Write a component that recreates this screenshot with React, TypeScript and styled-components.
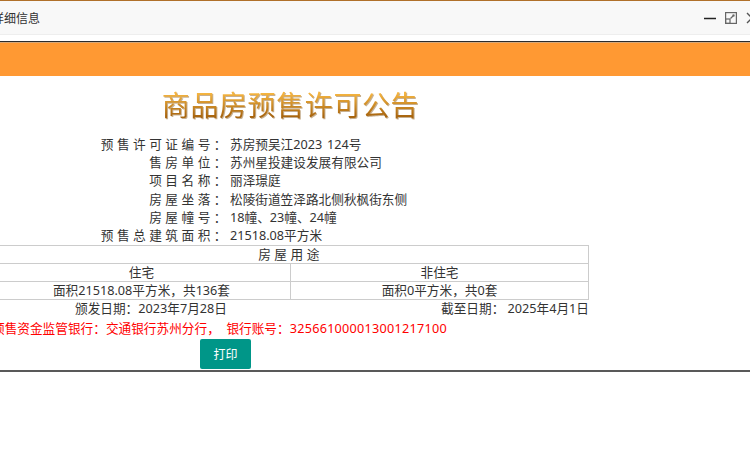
import React from "react";
import styled, { createGlobalStyle } from "styled-components";

const GlobalStyle = createGlobalStyle`
  html, body {
    margin: 0;
    padding: 0;
    background: #fff;
    overflow: hidden;
  }
  body {
    font-family: "Noto Sans", "Noto Sans CJK SC", sans-serif;
    font-size: 12.67px;
    color: #333;
  }
`;

const Dialog = styled.div`
  width: 750px;
  height: 372px;
  border-top: 1px solid #b0702a;
  border-bottom: 2px solid #595959;
  box-sizing: border-box;
  overflow: hidden;
`;

const TitleBar = styled.div`
  height: 33px;
  background: #f8f8f8;
  border-bottom: 1px solid #eee;
  display: flex;
  align-items: center;
  justify-content: space-between;
  font-size: 12px;
  color: #333;
`;

const TitleText = styled.div`
  margin-left: -8px;
  white-space: nowrap;
`;

const Controls = styled.div`
  display: flex;
  align-items: center;
  gap: 9px;
  margin-right: -8px;
`;

const Gap = styled.div`
  height: 6px;
  background: #fff;
`;

const OrangeBar = styled.div`
  height: 34px;
  background: #ff9933;
  border-top: 1px solid #2b2b2b;
  box-shadow: inset 0 1px 0 #d8a878;
`;

const Content = styled.div`
  width: 597px;
  margin-left: -8px;
`;

const Title = styled.h1`
  margin: 10px 0 0;
  height: 38px;
  text-align: center;
  font-size: 28px;
  line-height: 38px;
  letter-spacing: 0.6px;
  font-weight: 400;
  background: linear-gradient(180deg, #f4b440 20%, #a8650f 80%);
  -webkit-background-clip: text;
  background-clip: text;
  color: transparent;
  filter: drop-shadow(1px 1px 0 rgba(130, 80, 10, 0.45));
`;

const InfoList = styled.div`
  margin-top: 11px;
`;

const InfoRow = styled.div`
  display: flex;
  height: 18.2px;
  line-height: 18.2px;
`;

const InfoLabel = styled.div`
  width: 238px;
  text-align: right;
  letter-spacing: 3.5px;
  white-space: nowrap;
`;

const InfoValue = styled.div`
  white-space: nowrap;
  word-spacing: 1.5px;
`;

const UseTable = styled.table`
  width: 597px;
  border-collapse: collapse;
  table-layout: fixed;
  border: 1px solid #ccc;
  margin-top: 1px;

  td {
    border: 1px solid #ccc;
    height: 17px;
    padding: 0;
    text-align: center;
    line-height: 17px;
  }
`;

const HeadCell = styled.td`
  letter-spacing: 3.5px;
`;

const DateRow = styled.div`
  display: flex;
  justify-content: space-between;
  height: 17px;
  line-height: 17px;
`;

const DateText = styled.div<{ $pad?: number }>`
  padding-left: ${(p) => p.$pad || 0}px;
`;

const BankLine = styled.div`
  margin-top: 2px;
  height: 18px;
  line-height: 18px;
  color: #ff0000;
  white-space: nowrap;
`;

const AccountNo = styled.span`
  letter-spacing: 0.25px;
`;

const PrintRow = styled.div`
  margin-top: 2px;
  padding-left: 208px;
`;

const PrintButton = styled.button`
  width: 51px;
  height: 30px;
  border: none;
  border-radius: 2px;
  background: #009688;
  color: #fff;
  font-family: inherit;
  font-size: 12px;
  padding: 0;
`;

const rows = [
  ["预售许可证编号：", "苏房预吴江2023 124号"],
  ["售房单位：", "苏州星投建设发展有限公司"],
  ["项目名称：", "丽泽璟庭"],
  ["房屋坐落：", "松陵街道笠泽路北侧秋枫街东侧"],
  ["房屋幢号：", "18幢、23幢、24幢"],
  ["预售总建筑面积：", "21518.08平方米"],
];

export default function App() {
  return (
    <>
      <GlobalStyle />
      <Dialog>
        <TitleBar>
          <TitleText>详细信息</TitleText>
          <Controls>
            <svg width="12" height="12" viewBox="0 0 12 12">
              <path d="M0 6.5h12" stroke="#222" strokeWidth="1.5" />
            </svg>
            <svg width="12" height="12" viewBox="0 0 12 12" fill="none" stroke="#666" strokeWidth="1.2">
              <rect x="0.6" y="0.6" width="10.8" height="10.8" />
              <rect x="0.6" y="7" width="4.4" height="4.4" />
              <path d="M5.5 6.5L9 3" />
              <path d="M7.5 2.5h2v2h-2z" fill="#666" stroke="none" />
            </svg>
            <svg width="12" height="12" viewBox="0 0 12 12" fill="none" stroke="#555" strokeWidth="1.4">
              <path d="M1 1l10 10M11 1L1 11" />
            </svg>
          </Controls>
        </TitleBar>
        <Gap />
        <OrangeBar />
        <Content>
          <Title>商品房预售许可公告</Title>
          <InfoList>
            {rows.map(([label, value]) => (
              <InfoRow key={label}>
                <InfoLabel>{label}</InfoLabel>
                <InfoValue>{value}</InfoValue>
              </InfoRow>
            ))}
          </InfoList>
          <UseTable>
            <tbody>
              <tr>
                <HeadCell colSpan={2}>房屋用途</HeadCell>
              </tr>
              <tr>
                <td>住宅</td>
                <td>非住宅</td>
              </tr>
              <tr>
                <td>面积21518.08平方米，共136套</td>
                <td>面积0平方米，共0套</td>
              </tr>
            </tbody>
          </UseTable>
          <DateRow>
            <DateText $pad={83}>颁发日期：2023年7月28日</DateText>
            <DateText>截至日期： 2025年4月1日</DateText>
          </DateRow>
          <BankLine>
            预售资金监管银行：交通银行苏州分行，&nbsp;&nbsp;银行账号：<AccountNo>325661000013001217100</AccountNo>
          </BankLine>
          <PrintRow>
            <PrintButton>打印</PrintButton>
          </PrintRow>
        </Content>
      </Dialog>
    </>
  );
}
